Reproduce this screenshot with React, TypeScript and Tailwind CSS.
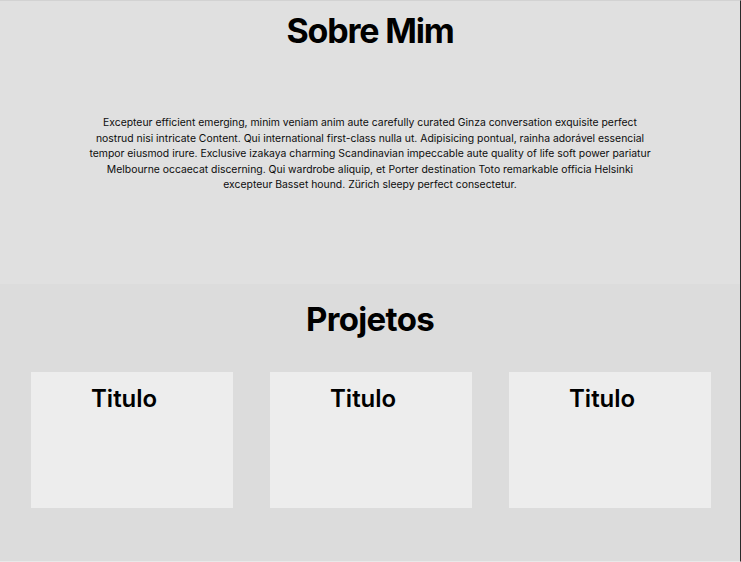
import React from "react";

const body =
  "Excepteur efficient emerging, minim veniam anim aute carefully curated Ginza conversation exquisite perfect nostrud nisi intricate Content. Qui international first-class nulla ut. Adipisicing pontual, rainha adorável essencial tempor eiusmod irure. Exclusive izakaya charming Scandinavian impeccable aute quality of life soft power pariatur Melbourne occaecat discerning. Qui wardrobe aliquip, et Porter destination Toto remarkable officia Helsinki excepteur Basset hound. Zürich sleepy perfect consectetur.";

function Card() {
  return (
    <div className="w-[202px] h-[136px] bg-[#ededed] pl-[60px] pt-[12px]">
      <h3 className="text-[24px] leading-[30px] font-semibold text-black">
        Titulo
      </h3>
    </div>
  );
}

export default function App() {
  return (
    <div
      className="w-[741px] h-[562px] flex flex-col border-r border-[#2a2a2a] border-t border-t-[#d2d2d2] border-b border-b-[#e9e9e9] overflow-hidden"
      style={{ fontFamily: "Inter, 'Noto Sans', sans-serif" }}
    >
      <section className="h-[283px] bg-[#e0e0e0] flex flex-col items-center">
        <h1 className="mt-[9px] text-[34px] leading-[41px] font-bold tracking-[-0.035em] text-black">
          Sobre Mim
        </h1>
        <p className="mt-[64px] w-[572px] text-center text-[10.4px] leading-[15.5px] text-[#0d0d0d]">
          {body}
        </p>
      </section>
      <section className="flex-1 bg-[#dcdcdc] flex flex-col">
        <h2 className="mt-[15px] text-center text-[33px] leading-[40px] font-bold tracking-[-0.02em] text-black">
          Projetos
        </h2>
        <div className="mt-[33px] flex gap-[37px] pl-[31px]">
          <Card />
          <Card />
          <Card />
        </div>
      </section>
    </div>
  );
}
